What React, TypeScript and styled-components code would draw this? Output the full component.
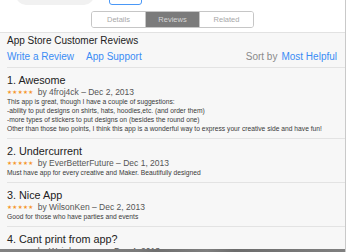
import React from "react"
import styled, { createGlobalStyle } from "styled-components"

const GlobalStyle = createGlobalStyle`
	html, body {
		margin: 0;
		padding: 0;
		background: #ffffff;
	}
	body {
		font-family: "Liberation Sans", Arial, sans-serif;
		-webkit-font-smoothing: antialiased;
	}
`

const Page = styled.div`
	width: 345px;
	height: 252px;
	overflow: hidden;
	border-right: 1px solid #c9c9c9;
	display: flex;
	flex-direction: column;
	background: #f7f7f7;
`

const TopArea = styled.div`
	background: #ffffff;
	height: 32px;
	border-bottom: 1px solid #e2e2e2;
	flex-shrink: 0;
	display: flex;
	flex-direction: column;
`

const ScrolledRow = styled.div`
	height: 5px;
	overflow: hidden;
	display: flex;
	align-items: flex-end;
	padding-left: 16px;
	gap: 15px;
`

const IconBox = styled.div`
	width: 78px;
	height: 30px;
	background: #f1f1f1;
	border-radius: 10px;
`

const BuyButton = styled.div`
	width: 31px;
	height: 20px;
	border: 1px solid #4a98f7;
	border-radius: 3px;
`

const SegmentWrap = styled.div`
	display: flex;
	justify-content: center;
	padding-top: 6px;
`

const Segmented = styled.div`
	display: flex;
	border: 1px solid #c6c6c6;
	border-radius: 3px;
	overflow: hidden;
`

const Segment = styled.div<{ $active?: boolean }>`
	width: 53px;
	height: 15px;
	display: flex;
	align-items: center;
	justify-content: center;
	font-size: 7.5px;
	color: ${({ $active }) => ($active ? "#d6d6d6" : "#a8a8a8")};
	background: ${({ $active }) => ($active ? "#7b7b7b" : "#ffffff")};
	& + & {
		border-left: 1px solid #c6c6c6;
	}
`

const Content = styled.div`
	flex: 1;
	overflow: hidden;
`

const Header = styled.div`
	margin-left: 7px;
	padding: 2px 8px 0 0;
	box-sizing: border-box;
	height: 35px;
	border-bottom: 1px solid #e3e3e3;
`

const HeaderTitle = styled.div`
	font-size: 10px;
	line-height: 12px;
	color: #222222;
`

const LinkRow = styled.div`
	display: flex;
	align-items: center;
	margin-top: 3px;
	font-size: 10px;
	line-height: 13px;
`

const Link = styled.span`
	color: #3a8cf5;
	& + & {
		margin-left: 12px;
	}
`

const SortBy = styled.span`
	margin-left: auto;
	color: #8a8a8a;
	margin-right: 4px;
`

const ReviewItem = styled.div`
	margin-left: 7px;
	padding: 5px 0 5px 0;
	border-bottom: 1px solid #e3e3e3;
`

const ReviewTitle = styled.div`
	font-size: 10.8px;
	line-height: 14px;
	color: #222222;
`

const Meta = styled.div`
	font-size: 8.5px;
	line-height: 10px;
	color: #555555;
	display: flex;
	align-items: center;
	white-space: nowrap;
`

const Stars = styled.span`
	color: #f5962a;
	font-size: 5.5px;
	letter-spacing: 0.4px;
	margin-right: 4px;
	font-family: "DejaVu Sans", sans-serif;
`

const Body = styled.div`
	font-size: 6.7px;
	line-height: 9px;
	color: #3a3a3a;
	white-space: nowrap;
`

const BottomBar = styled.div`
	height: 3px;
	flex-shrink: 0;
	background: linear-gradient(90deg, #828282 0%, #7a7a7a 40%, #6f6f6f 45%, #7e7e7e 60%, #6c6c6c 68%, #808080 100%);
`

const reviews = [
	{
		title: "1. Awesome",
		author: "4froj4ck",
		date: "Dec 2, 2013",
		body: [
			"This app is great, though I have a couple of suggestions:",
			"-ability to put designs on shirts, hats, hoodies,etc. (and order them)",
			"-more types of stickers to put designs on (besides the round one)",
			"Other than those two points, I think this app is a wonderful way to express your creative side and have fun!",
		],
	},
	{
		title: "2. Undercurrent",
		author: "EverBetterFuture",
		date: "Dec 1, 2013",
		body: ["Must have app for every creative and Maker. Beautifully designed"],
	},
	{
		title: "3. Nice App",
		author: "WilsonKen",
		date: "Dec 2, 2013",
		body: ["Good for those who have parties and events"],
	},
	{
		title: "4. Cant print from app?",
		author: "Weird-momma",
		date: "Dec 4, 2013",
		body: ["I would love to print from the app itself"],
	},
]

const App: React.FC = () => {
	return (
		<>
			<GlobalStyle />
			<Page>
				<TopArea>
					<ScrolledRow>
						<IconBox />
						<BuyButton />
					</ScrolledRow>
					<SegmentWrap>
						<Segmented>
							<Segment>Details</Segment>
							<Segment $active>Reviews</Segment>
							<Segment>Related</Segment>
						</Segmented>
					</SegmentWrap>
				</TopArea>
				<Content>
					<Header>
						<HeaderTitle>App Store Customer Reviews</HeaderTitle>
						<LinkRow>
							<Link>Write a Review</Link>
							<Link>App Support</Link>
							<SortBy>Sort by</SortBy>
							<Link>Most Helpful</Link>
						</LinkRow>
					</Header>
					{reviews.map((r) => (
						<ReviewItem key={r.title}>
							<ReviewTitle>{r.title}</ReviewTitle>
							<Meta>
								<Stars>★★★★★</Stars>
								by {r.author} – {r.date}
							</Meta>
							{r.body.map((line) => (
								<Body key={line}>{line}</Body>
							))}
						</ReviewItem>
					))}
				</Content>
				<BottomBar />
			</Page>
		</>
	)
}

export default App
